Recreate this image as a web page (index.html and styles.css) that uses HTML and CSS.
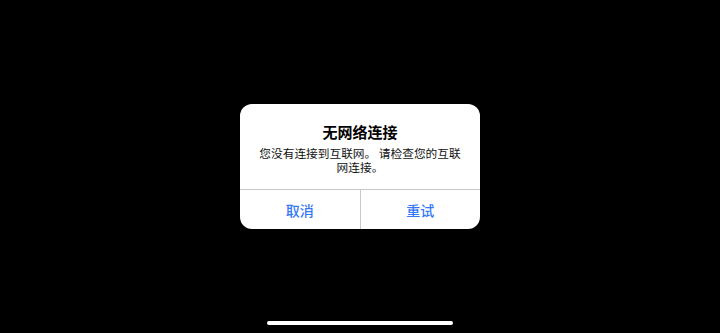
FILE: index.html
```html
<!DOCTYPE html>
<html lang="zh">
<head>
    <meta charset="UTF-8">
    <meta name="viewport" content="width=device-width, initial-scale=1.0">
    <title>无网络连接</title>
    <link rel="stylesheet" href="styles.css">
</head>
<body>
    <div class="alert">
        <div class="alert-content">
            <h2 class="alert-title">无网络连接</h2>
            <p class="alert-message">您没有连接到互联网。 请检查您的互联网连接。</p>
        </div>
        <div class="alert-actions">
            <button class="alert-btn">取消</button>
            <button class="alert-btn">重试</button>
        </div>
    </div>
    <div class="home-indicator"></div>
</body>
</html>
```

FILE: styles.css
```css
html, body {
    margin: 0;
    padding: 0;
}

body {
    background: #000;
    height: 333px;
    overflow: hidden;
    font-family: "Noto Sans CJK SC", "Noto Sans", sans-serif;
    display: flex;
    flex-direction: column;
    align-items: center;
}

.alert {
    width: 240px;
    margin-top: 104px;
    background: #fff;
    border-radius: 12px;
    overflow: hidden;
}

.alert-content {
    padding: 18px 15px 15px;
    text-align: center;
}

.alert-title {
    margin: 0;
    font-size: 15px;
    line-height: 20px;
    font-weight: 600;
    color: #000;
}

.alert-message {
    margin: 4px 0 0;
    font-size: 11.7px;
    line-height: 14px;
    color: #111;
}

.alert-actions {
    display: flex;
    border-top: 1px solid #c8c8cc;
}

.alert-btn {
    flex: 1;
    height: 39px;
    border: none;
    background: none;
    padding: 0;
    font-family: inherit;
    font-size: 14px;
    font-weight: 500;
    color: #3478f6;
}

.alert-btn + .alert-btn {
    border-left: 1px solid #c8c8cc;
}

.home-indicator {
    width: 186px;
    height: 4px;
    background: #fff;
    border-radius: 2px;
    margin-top: auto;
    margin-bottom: 8px;
}
```
